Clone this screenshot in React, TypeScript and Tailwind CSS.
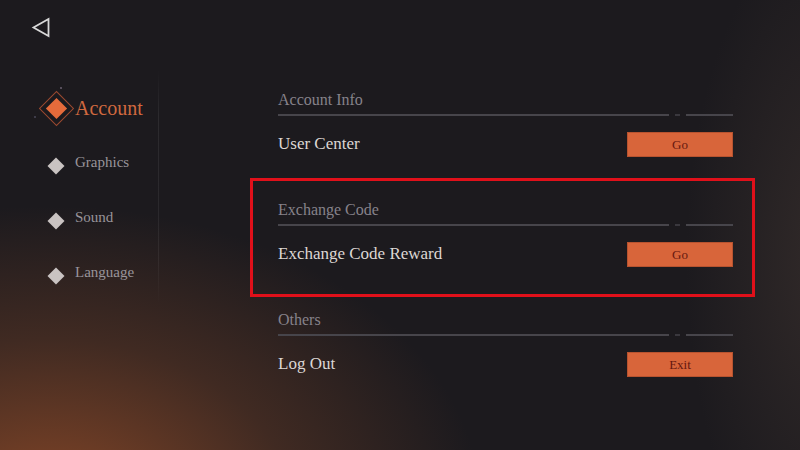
import React from "react";

const serif = { fontFamily: '"Liberation Serif", "DejaVu Serif", serif' };

function SideItem({ label, active }: { label: string; active?: boolean }) {
  if (active) {
    return (
      <div className="relative flex h-[36px] items-center">
        <div className="relative flex h-[36px] w-[36px] shrink-0 items-center justify-center">
          <div className="absolute h-[25px] w-[25px] rotate-45 border-[1.5px] border-[#9c4a30]" />
          <div className="absolute h-[15px] w-[15px] rotate-45 bg-[#e56b3b]" />
        </div>
        <span className="ml-[1px] text-[20px] leading-none text-[#d0693f]">{label}</span>
        <div className="absolute left-[22px] top-[-3px] h-[2px] w-[2px] rounded-full bg-[#6a6070]" />
        <div className="absolute left-[-4px] top-[26px] h-[2px] w-[2px] rounded-full bg-[#4a4858]" />
      </div>
    );
  }
  return (
    <div className="flex h-[20px] items-center">
      <div className="flex w-[36px] shrink-0 items-center justify-center pt-[7px]">
        <div className="h-[12px] w-[12px] rotate-45 bg-[#c9c3c2]" />
      </div>
      <span className="ml-[1px] text-[15px] leading-none text-[#99949a]">{label}</span>
    </div>
  );
}

function Section({
  title,
  row,
  button,
}: {
  title: string;
  row: string;
  button: string;
}) {
  return (
    <div className="flex flex-col">
      <div className="h-[20px] text-[16px] leading-[20px] text-[#86828a]">{title}</div>
      <div className="mt-[4px] flex h-[2px] items-center">
        <div className="h-[2px] flex-1 bg-[#47454b]" />
        <div className="ml-[6px] h-[2px] w-[5px] bg-[#3a383e]" />
        <div className="ml-[6px] h-[2px] w-[47px] bg-[#47454b]" />
      </div>
      <div className="mt-[16px] flex h-[25px] items-center justify-between">
        <span className="pb-[3px] text-[17px] leading-none text-[#dcd7d4]">{row}</span>
        <button className="flex h-[25px] w-[106px] items-center justify-center border border-[#b8532f] bg-[#d8653a] text-[13px] leading-none text-[#651810]">
          {button}
        </button>
      </div>
    </div>
  );
}

export default function App() {
  return (
    <div
      className="relative flex h-[450px] w-[800px] flex-col overflow-hidden bg-[#1c1a1e] bg-[radial-gradient(ellipse_540px_380px_at_50px_510px,rgba(145,75,40,0.9),rgba(100,58,38,0.5)_45%,transparent_80%),radial-gradient(ellipse_180px_420px_at_830px_260px,rgba(90,72,62,0.35),transparent_80%)]"
      style={serif}
    >
      {/* header */}
      <div className="flex h-[55px] items-start pl-[31px] pt-[17px]">
        <svg width="20" height="21" viewBox="0 0 20 21">
          <path d="M17.5 2 L2.5 10.5 L17.5 19 Z" fill="none" stroke="#d8d8d8" strokeWidth="1.8" strokeLinejoin="miter" />
        </svg>
      </div>

      <div className="flex flex-1">
        {/* sidebar */}
        <div className="flex w-[158px] flex-col pl-[38px] pt-[35px]">
          <SideItem label="Account" active />
          <div className="mt-[26px] flex flex-col gap-[35px]">
            <SideItem label="Graphics" />
            <SideItem label="Sound" />
            <SideItem label="Language" />
          </div>
        </div>

        {/* divider */}
        <div className="mt-[15px] h-[235px] w-[1px] bg-[linear-gradient(to_bottom,transparent,rgba(255,255,255,0.07)_20%,rgba(255,255,255,0.06)_80%,transparent)]" />

        {/* main */}
        <div className="ml-[91px] flex w-[505px] flex-col pt-[35px]">
          <div className="pl-[28px] pr-[22px]">
            <Section title="Account Info" row="User Center" button="Go" />
          </div>
          <div className="mt-[21px] border-[3px] border-[#e0101a] pb-[27px] pl-[25px] pr-[19px] pt-[19px]">
            <Section title="Exchange Code" row="Exchange Code Reward" button="Go" />
          </div>
          <div className="mt-[13px] pl-[28px] pr-[22px]">
            <Section title="Others" row="Log Out" button="Exit" />
          </div>
        </div>
      </div>
    </div>
  );
}
